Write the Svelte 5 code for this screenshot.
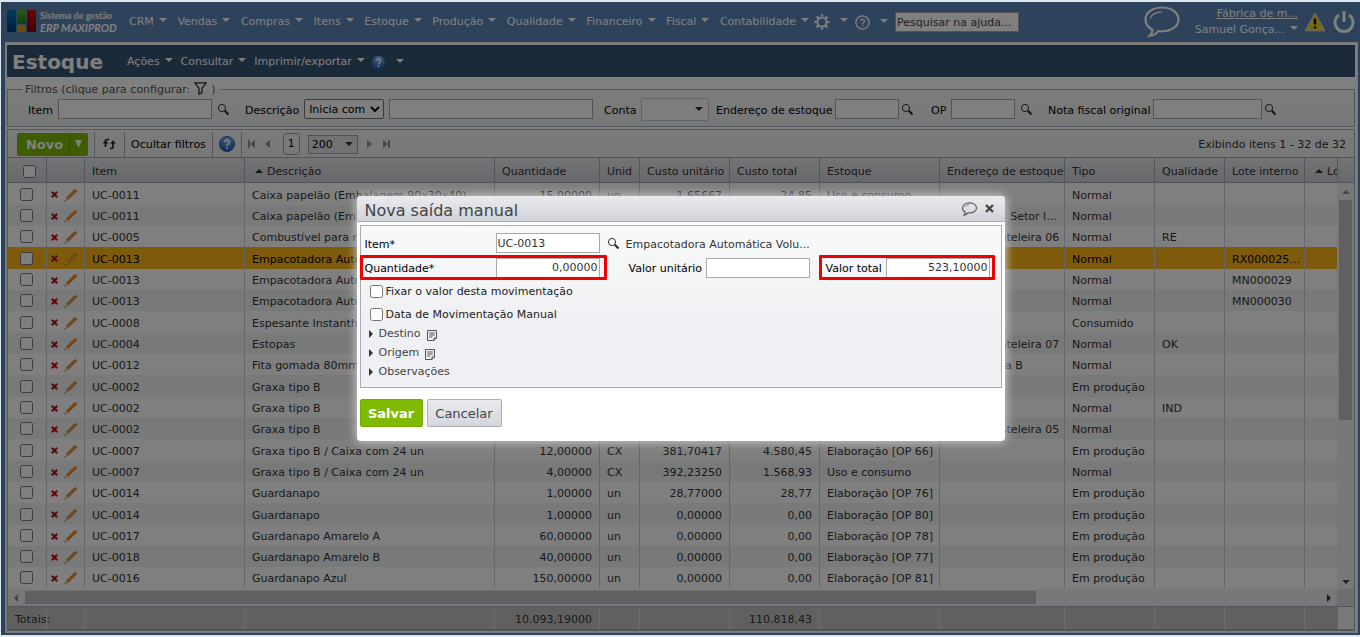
<script lang="ts">
	type Row = {
		item: string;
		descricao: string;
		quantidade?: string;
		unid?: string;
		custoUnitario?: string;
		custoTotal?: string;
		estoque?: string;
		endereco?: string;
		tipo: string;
		qualidade?: string;
		lote?: string;
	};

	const menus = [
		'CRM',
		'Vendas',
		'Compras',
		'Itens',
		'Estoque',
		'Produção',
		'Qualidade',
		'Financeiro',
		'Fiscal',
		'Contabilidade'
	];
	const actions = ['Ações', 'Consultar', 'Imprimir/exportar'];
	const columns = [39, 38, 160, 250, 105, 40, 90, 90, 120, 125, 90, 70, 80, 320];

	const rows: Row[] = [
		{ item: 'UC-0011', descricao: 'Caixa papelão (Embalagem 90x30x40)', quantidade: '15,00000', unid: 'un', custoUnitario: '1,65667', custoTotal: '24,85', estoque: 'Uso e consumo', tipo: 'Normal' },
		{ item: 'UC-0011', descricao: 'Caixa papelão (Emb', endereco: 'Estante 1 - Setor lavagem', tipo: 'Normal' },
		{ item: 'UC-0005', descricao: 'Combustível para m', endereco: 'Rua 12 Prateleira 06', tipo: 'Normal', qualidade: 'RE' },
		{ item: 'UC-0013', descricao: 'Empacotadora Auto', tipo: 'Normal', lote: 'RX000025134' },
		{ item: 'UC-0013', descricao: 'Empacotadora Auto', tipo: 'Normal', lote: 'MN000029' },
		{ item: 'UC-0013', descricao: 'Empacotadora Auto', tipo: 'Normal', lote: 'MN000030' },
		{ item: 'UC-0008', descricao: 'Espesante Instanth', tipo: 'Consumido' },
		{ item: 'UC-0004', descricao: 'Estopas', endereco: 'Rua 12 Prateleira 07', tipo: 'Normal', qualidade: 'OK' },
		{ item: 'UC-0012', descricao: 'Fita gomada 80mm', endereco: 'Câmara fria B', tipo: 'Normal' },
		{ item: 'UC-0002', descricao: 'Graxa tipo B', tipo: 'Em produção' },
		{ item: 'UC-0002', descricao: 'Graxa tipo B', tipo: 'Normal', qualidade: 'IND' },
		{ item: 'UC-0002', descricao: 'Graxa tipo B', endereco: 'Rua 12 Prateleira 05', tipo: 'Normal' },
		{ item: 'UC-0007', descricao: 'Graxa tipo B / Caixa com 24 un', quantidade: '12,00000', unid: 'CX', custoUnitario: '381,70417', custoTotal: '4.580,45', estoque: 'Elaboração [OP 66]', tipo: 'Em produção' },
		{ item: 'UC-0007', descricao: 'Graxa tipo B / Caixa com 24 un', quantidade: '4,00000', unid: 'CX', custoUnitario: '392,23250', custoTotal: '1.568,93', estoque: 'Uso e consumo', tipo: 'Normal' },
		{ item: 'UC-0014', descricao: 'Guardanapo', quantidade: '1,00000', unid: 'un', custoUnitario: '28,77000', custoTotal: '28,77', estoque: 'Elaboração [OP 76]', tipo: 'Em produção' },
		{ item: 'UC-0014', descricao: 'Guardanapo', quantidade: '1,00000', unid: 'un', custoUnitario: '0,00000', custoTotal: '0,00', estoque: 'Elaboração [OP 80]', tipo: 'Em produção' },
		{ item: 'UC-0017', descricao: 'Guardanapo Amarelo A', quantidade: '60,00000', unid: 'un', custoUnitario: '0,00000', custoTotal: '0,00', estoque: 'Elaboração [OP 78]', tipo: 'Em produção' },
		{ item: 'UC-0018', descricao: 'Guardanapo Amarelo B', quantidade: '40,00000', unid: 'un', custoUnitario: '0,00000', custoTotal: '0,00', estoque: 'Elaboração [OP 77]', tipo: 'Em produção' },
		{ item: 'UC-0016', descricao: 'Guardanapo Azul', quantidade: '150,00000', unid: 'un', custoUnitario: '0,00000', custoTotal: '0,00', estoque: 'Elaboração [OP 81]', tipo: 'Em produção' }
	];
	const selected = 3;

	let item = 'UC-0013';
	let quantidade = '0,00000';
	let valorUnitario = '';
	let valorTotal = '523,10000';
	let open = true;
</script>

{#snippet search()}
	<button class="icon-button lens" aria-label="Pesquisar">
		<svg width="13" height="13" viewBox="0 0 13 13">
			<circle cx="5" cy="5" r="3.6" fill="none" stroke="#333" />
			<path d="M7.8 7.8 11.5 11.5" stroke="#222" stroke-width="2" />
		</svg>
	</button>
{/snippet}

{#snippet help(size: number)}
	<svg width={size} height={size} viewBox="0 0 16 16">
		<defs>
			<radialGradient id="help{size}" cx="50%" cy="20%" r="80%">
				<stop offset="0" stop-color="#8fbdf2" />
				<stop offset="1" stop-color="#1c56b5" />
			</radialGradient>
		</defs>
		<circle cx="8" cy="8" r="7.5" fill="url(#help{size})" stroke="#2b5ca8" />
		<path d="M5.8 6.2C5.8 3.4 10.4 3.5 10.3 6.2 10.3 7.8 8 7.8 8 9.8" fill="none" stroke="#fff" stroke-width="1.6" />
		<circle cx="8" cy="12" r="1" fill="#fff" />
	</svg>
{/snippet}

{#snippet note()}
	<svg class="note" width="10" height="11" viewBox="0 0 10 11">
		<path d="M.5.5h9v7.500l-2.500 2.500H.5zM9.500 8H7v2.500M2.200 3h5.600M2.200 5h5.600M2.200 7h3" fill="none" stroke="#555" />
	</svg>
{/snippet}

{#snippet cols()}
	<colgroup>
		{#each columns as width}
			<col style:width={width + 'px'} />
		{/each}
	</colgroup>
{/snippet}

<div class="page">
	<header class="topbar">
		<a class="brand" href="#inicio">
			<svg width="29" height="22" viewBox="0 0 29 22">
				<defs>
					<linearGradient id="blue" x2="0" y2="1"><stop stop-color="#0078b8" /><stop offset="1" stop-color="#003c78" /></linearGradient>
					<linearGradient id="green" x2="0" y2="1"><stop stop-color="#56b42a" /><stop offset="1" stop-color="#267c14" /></linearGradient>
					<linearGradient id="red" x2="0" y2="1"><stop stop-color="#d40d12" /><stop offset="1" stop-color="#850006" /></linearGradient>
				</defs>
				<rect width="9" height="22" rx="1" fill="url(#blue)" />
				<rect x="10" width="9" height="14" rx="1" fill="url(#green)" />
				<rect x="10" y="15" width="9" height="7" rx="1" fill="#d39a10" />
				<rect x="20" width="9" height="22" rx="1" fill="url(#red)" />
			</svg>
			<span>Sistema de gestão<em>ERP MAXIPROD</em></span>
		</a>
		<nav class="menu">
			{#each menus as menu}
				<button class="menu-item">{menu}<i class="caret"></i></button>
			{/each}
		</nav>
		<button class="menu-item tool" aria-label="Configurações">
			<svg width="16" height="16" viewBox="0 0 16 16" fill="none" stroke="#fff">
				<circle cx="8" cy="8" r="4.600" stroke-width="2" />
				<circle cx="8" cy="8" r="6.600" stroke-width="2.200" stroke-dasharray="2.400 2.780" stroke-dashoffset="1.200" />
			</svg>
			<i class="caret"></i>
		</button>
		<button class="menu-item tool" aria-label="Ajuda">
			<svg width="15" height="15" viewBox="0 0 15 15" fill="none" stroke="#fff">
				<circle cx="7.500" cy="7.500" r="6.600" stroke-width="1.400" />
				<path d="M5.600 6C5.600 3.700 9.500 3.700 9.500 6 9.500 7.300 7.500 7.400 7.500 9.200M7.500 10.300v1.400" stroke-width="1.300" />
			</svg>
			<i class="caret"></i>
		</button>
		<input class="help-search" aria-label="Pesquisar na ajuda" placeholder="Pesquisar na ajuda..." />
		<div class="account">
			<button class="icon-button" aria-label="Mensagens">
				<svg width="36" height="32" viewBox="0 0 36 32" fill="none" stroke="#fff">
					<path d="M18 1.500C8.500 1.500 1.500 6.700 1.500 13.500c0 4.300 2.600 8 7 10.200-.2 2.500-1.200 4.600-3 6.300 4.200-.6 7-2.400 8.700-5 1.200.2 2.500.3 3.800.3 9.500 0 16.500-5 16.500-11.800S27.500 1.500 18 1.500z" stroke-width="2.200" />
					<path d="M6 12.500C7.500 8.500 12 6.300 17.500 6" stroke-width="1.300" />
				</svg>
			</button>
			<div class="user">
				<a href="#empresa">Fábrica de m...</a>
				<button class="menu-item">Samuel Gonça...<i class="caret"></i></button>
			</div>
			<button class="icon-button alert" aria-label="Avisos">
				<svg width="22" height="20" viewBox="0 0 22 20">
					<path d="M11 1.500 20.500 18.500H1.500z" fill="#f6d410" stroke="#d9d2b8" stroke-width="1.500" stroke-linejoin="round" />
					<path d="M11 6.500v6M11 14.300v2.200" stroke="#111" stroke-width="2.400" />
				</svg>
			</button>
			<button class="icon-button" aria-label="Sair">
				<svg width="22" height="24" viewBox="0 0 22 24" fill="none" stroke="#fff" stroke-width="3">
					<path d="M6 5a9 9 0 1 0 10 0M11 1v11" />
				</svg>
			</button>
		</div>
	</header>

	<main class="frame">
		<div class="titlebar">
			<h1>Estoque</h1>
			{#each actions as action}
				<button class="menu-item">{action}<i class="caret"></i></button>
			{/each}
			<button class="menu-item help" aria-label="Ajuda da tela">{@render help(15)}<i class="caret"></i></button>
		</div>

		<fieldset class="filters">
			<legend>
				Filtros (clique para configurar:
				<svg width="13" height="13" viewBox="0 0 13 13" fill="none" stroke="#333" stroke-width="1.300">
					<path d="M.8.8h11.400L8 6.300v4.200l-3 1.700V6.300z" />
				</svg>)
			</legend>
			<div class="filter-row">
				<div class="filter">
					<label for="f-item">Item</label>
					<input id="f-item" class="wide" />
					{@render search()}
				</div>
				<div class="filter">
					<label for="f-descricao">Descrição</label>
					<select aria-label="Tipo de busca"><option>Inicia com</option></select>
					<input id="f-descricao" class="widest" />
				</div>
				<div class="filter">
					<label for="f-conta">Conta</label>
					<button id="f-conta" class="combo" aria-label="Conta"><i class="caret dark"></i></button>
				</div>
				<div class="filter tight">
					<label for="f-endereco">Endereço de estoque</label>
					<input id="f-endereco" />
					{@render search()}
				</div>
				<div class="filter">
					<label for="f-op">OP</label>
					<input id="f-op" />
					{@render search()}
				</div>
				<div class="filter tight">
					<label for="f-nota">Nota fiscal original</label>
					<input id="f-nota" class="medium" />
					{@render search()}
				</div>
			</div>
		</fieldset>

		<section class="grid">
			<div class="toolbar">
				<div class="split">
					<button>Novo</button>
					<button class="more" aria-label="Mais opções">
						<svg width="7" height="8" viewBox="0 0 7 8" fill="#fff"><path d="M0 0h7L3.500 8z" /></svg>
					</button>
				</div>
				<button class="tool-item" aria-label="Atualizar">
					<svg width="17" height="12" viewBox="0 0 17 12" fill="none" stroke="#222" stroke-width="1.700">
						<path d="M8 1.500H6Q4.500 1.500 4.500 3V9M9 10.500h1.500Q12 10.500 12 9V3.500" />
						<path d="M1.500 5.500h6L4.500 2.500zM9 5.500h6L12 2.500z" fill="#222" stroke="none" />
					</svg>
				</button>
				<button class="tool-item">Ocultar filtros</button>
				<button class="tool-item" aria-label="Ajuda da lista">{@render help(16)}</button>
				<div class="pager">
					<button class="icon-button" aria-label="Primeira página">
						<svg width="8" height="8" viewBox="0 0 8 8" fill="#8c9099"><path d="M0 0h2v8H0zM7 0v8L2 4z" /></svg>
					</button>
					<button class="icon-button" aria-label="Página anterior">
						<svg width="8" height="8" viewBox="0 0 8 8" fill="#8c9099"><path d="M6 0v8L1 4z" /></svg>
					</button>
					<span class="current">1</span>
					<button class="page-size">200<i class="caret dark"></i></button>
					<button class="icon-button" aria-label="Próxima página">
						<svg width="8" height="8" viewBox="0 0 8 8" fill="#8c9099"><path d="M1 0v8l5-4z" /></svg>
					</button>
					<button class="icon-button" aria-label="Última página">
						<svg width="8" height="8" viewBox="0 0 8 8" fill="#8c9099"><path d="M6 0h2v8H6zM1 0v8l5-4z" /></svg>
					</button>
				</div>
				<span class="count">Exibindo itens 1 - 32 de 32</span>
			</div>

			<div class="grid-header">
				<div class="clip">
					<table>
						{@render cols()}
						<thead>
							<tr>
								<th class="check"><input type="checkbox" aria-label="Selecionar todos" /></th>
								<th></th>
								<th>Item</th>
								<th><i class="sort"></i>Descrição</th>
								<th>Quantidade</th>
								<th>Unid</th>
								<th>Custo unitário</th>
								<th>Custo total</th>
								<th>Estoque</th>
								<th>Endereço de estoque</th>
								<th>Tipo</th>
								<th>Qualidade</th>
								<th>Lote interno</th>
								<th><i class="sort"></i>Lote</th>
							</tr>
						</thead>
					</table>
				</div>
			</div>

			<div class="grid-body">
				<div class="clip">
					<table>
						{@render cols()}
						<tbody>
							{#each rows as row, i}
								<tr class:selected={i === selected}>
									<td class="check"><input type="checkbox" aria-label={row.item} checked={false} /></td>
									<td class="commands">
										<button class="icon-button" aria-label="Excluir">
											<svg width="7" height="7" viewBox="0 0 7 7" stroke="#b8101c" stroke-width="2.200"><path d="M.8.8l5.400 5.400M6.200.8.8 6.200" /></svg>
										</button>
										<button class="icon-button" aria-label="Editar">
											<svg width="14" height="14" viewBox="0 0 14 14">
												<path d="M2.200 9.800 11 1.200 13 3 4 11.800z" fill="#e8953a" stroke="#c87622" stroke-width=".6" />
												<path d="M2.200 9.800 4 11.800.8 13z" fill="#e8cfa8" />
												<path d="M.4 13.600 1 12l1 1z" fill="#333" />
											</svg>
										</button>
									</td>
									<td>{row.item}</td>
									<td>{row.descricao}</td>
									<td class="number">{row.quantidade ?? ''}</td>
									<td>{row.unid ?? ''}</td>
									<td class="number">{row.custoUnitario ?? ''}</td>
									<td class="number">{row.custoTotal ?? ''}</td>
									<td>{row.estoque ?? ''}</td>
									<td>{row.endereco ?? ''}</td>
									<td>{row.tipo}</td>
									<td>{row.qualidade ?? ''}</td>
									<td>{row.lote ?? ''}</td>
									<td></td>
								</tr>
							{/each}
						</tbody>
					</table>
				</div>
				<div class="vscroll">
					<i class="arrow up"></i>
					<div class="track"><div class="thumb"></div></div>
					<i class="arrow down"></i>
				</div>
			</div>
			<div class="hscroll">
				<i class="arrow left"></i>
				<div class="track"><div class="thumb"></div></div>
				<i class="arrow right"></i>
				<div class="corner"></div>
			</div>

			<div class="grid-footer">
				<div class="clip">
					<table>
						{@render cols()}
						<tbody>
							<tr>
								<td class="totals">Totais:</td>
								<td></td>
								<td></td>
								<td></td>
								<td class="number">10.093,19000</td>
								<td></td>
								<td></td>
								<td class="number">110.818,43</td>
								<td></td>
								<td></td>
								<td></td>
								<td></td>
								<td></td>
								<td></td>
							</tr>
						</tbody>
					</table>
				</div>
			</div>
		</section>
	</main>

	{#if open}
		<div class="overlay">
			<div class="dialog" role="dialog" aria-labelledby="dialog-title">
				<div class="dialog-header">
					<h2 id="dialog-title">Nova saída manual</h2>
					<button class="icon-button" aria-label="Comentários">
						<svg width="17" height="14" viewBox="0 0 36 32" fill="none" stroke="#555">
							<path d="M18 2C8.500 2 2 7 2 13.500c0 4.300 2.300 7.800 6.500 9.800-.2 2.500-1.200 4.700-3 6.700 4.200-.6 7-2.700 8.700-5.200 1.200.2 2.500.3 3.800.3C27.500 25.100 34 20 34 13.500S27.500 2 18 2z" stroke-width="2.400" />
							<path d="M7 12C8.500 8.500 12 7 17 6.500" stroke-width="1.500" />
						</svg>
					</button>
					<button class="icon-button" aria-label="Fechar" on:click={() => (open = false)}>
						<svg width="9" height="9" viewBox="0 0 9 9" stroke="#444" stroke-width="2.400"><path d="M1 1l7 7M8 1 1 8" /></svg>
					</button>
				</div>
				<form class="panel" on:submit|preventDefault>
					<div class="row first">
						<div class="field">
							<label for="item">Item*</label>
							<input id="item" class="code" bind:value={item} />
						</div>
						{@render search()}
						<span class="item-name">Empacotadora Automática Volu...</span>
					</div>
					<div class="row">
						<div class="field marked">
							<label for="quantidade">Quantidade*</label>
							<input id="quantidade" bind:value={quantidade} />
						</div>
						<div class="field unit">
							<label for="unitario">Valor unitário</label>
							<input id="unitario" bind:value={valorUnitario} />
						</div>
						<div class="field marked total">
							<label for="total">Valor total</label>
							<input id="total" bind:value={valorTotal} />
						</div>
					</div>
					<label class="option"><input type="checkbox" />Fixar o valor desta movimentação</label>
					<label class="option"><input type="checkbox" />Data de Movimentação Manual</label>
					<button type="button" class="expander"><i class="arrow right"></i>Destino {@render note()}</button>
					<button type="button" class="expander"><i class="arrow right"></i>Origem {@render note()}</button>
					<button type="button" class="expander"><i class="arrow right"></i>Observações</button>
				</form>
				<div class="buttons">
					<button class="save">Salvar</button>
					<button class="cancel" on:click={() => (open = false)}>Cancelar</button>
				</div>
			</div>
		</div>
	{/if}
</div>

<style>
	:global(body) {
		background: #fff;
	}
	.page {
		--line: #a5abb8;
		--text: #333;
		box-sizing: border-box;
		position: relative;
		display: flex;
		flex-direction: column;
		min-height: 100vh;
		background: #5d85b8;
		border: solid #dce9f0;
		border-width: 2px 0 2px 1px;
		color: var(--text);
		font-family: Verdana, 'DejaVu Sans', sans-serif;
		font-size: 11px;
		overflow: hidden;
	}
	button,
	input,
	select {
		font: inherit;
		color: inherit;
	}
	button {
		margin: 0;
		padding: 0;
		border: 0;
		background: none;
		white-space: nowrap;
	}
	svg {
		display: block;
	}
	input:not([type='checkbox']) {
		box-sizing: border-box;
		width: 64px;
		height: 20px;
		padding: 0 1px;
		border: 1px solid #a9a9a9;
		background: #fff;
	}
	input[type='checkbox'] {
		width: 13px;
		height: 13px;
		margin: 0;
	}
	.icon-button {
		display: inline-block;
		flex: none;
	}
	.caret {
		display: inline-block;
		flex: none;
		border: 4px solid transparent;
		border-top-color: currentColor;
		border-bottom: 0;
	}
	.caret.dark {
		color: #333;
	}
	.arrow {
		flex: none;
		border: 4px solid transparent;
	}
	.arrow.up {
		border-top: 0;
		border-bottom-color: #888;
	}
	.arrow.down {
		border-bottom: 0;
		border-top-color: #444;
	}
	.arrow.left {
		border-left: 0;
		border-right-color: #888;
	}
	.arrow.right {
		border-right: 0;
		border-left-color: #333;
	}

	/* top bar */
	.topbar {
		display: flex;
		align-items: center;
		height: 40px;
		padding: 0 5px 0 6px;
		color: #fff;
	}
	.brand {
		display: flex;
		gap: 4px;
		width: 122px;
		color: #fff;
		font: bold 9px/12px Lato, sans-serif;
		text-decoration: none;
		white-space: nowrap;
	}
	.brand em {
		display: block;
		font-size: 11px;
	}
	.menu {
		display: flex;
		justify-content: space-between;
		width: 680px;
		margin-right: 5px;
	}
	.menu-item {
		display: flex;
		gap: 5px;
		line-height: 16px;
	}
	.menu-item .caret {
		margin-top: 4px;
	}
	.tool {
		gap: 10px;
		margin-right: 7px;
	}
	.help-search:not([type='checkbox']) {
		width: 124px;
		color: #333;
	}
	.help-search::placeholder {
		color: #444;
	}
	.account {
		display: flex;
		align-items: center;
		margin-left: auto;
	}
	.user {
		display: flex;
		flex-direction: column;
		align-items: flex-end;
		width: 118px;
		margin-right: 6px;
		line-height: 16px;
	}
	.user a {
		color: #fff;
	}
	.alert {
		margin-right: 7px;
	}

	/* content frame */
	.frame {
		display: flex;
		flex: 1;
		flex-direction: column;
		margin: 0 2px 2px 4px;
		padding: 2px 2px 1px 1px;
		border: 1px solid #eee;
		background: #fff;
	}
	.titlebar {
		display: flex;
		align-items: center;
		gap: 8px;
		box-sizing: border-box;
		height: 32px;
		padding: 2px 0 0 5px;
		background: #365472;
		color: #fff;
	}
	.titlebar h1 {
		width: 107px;
		margin: 0;
		font-size: 20px;
		line-height: 30px;
	}
	.titlebar .help {
		gap: 10px;
		margin-left: -2px;
	}
	.filters {
		min-width: 0;
		margin: 5px 0 2px;
		padding: 0 0 6px;
		border: 1px solid var(--line);
		background: linear-gradient(#f7f8f8, #eef1f0);
	}
	.filters legend {
		display: flex;
		gap: 4px;
		height: 14px;
		margin-left: 14px;
		padding: 0 3px;
		color: #555;
		line-height: 15px;
		white-space: nowrap;
	}
	.filter-row {
		display: grid;
		grid-template-columns: 217px 359px 112px 215px 117px auto;
		padding: 2px 0 0 20px;
	}
	.filter {
		display: flex;
		align-items: center;
		gap: 5px;
		height: 22px;
		color: #000;
		white-space: nowrap;
	}
	.filter.tight {
		gap: 2px;
	}
	.filter label {
		padding-top: 3px;
	}
	.filter input.wide {
		width: 154px;
	}
	.filter input.widest {
		width: 204px;
	}
	.filter input.medium {
		width: 109px;
	}
	.filter select {
		width: 80px;
		height: 20px;
		padding: 0;
		border: 1px solid #767676;
		border-radius: 2px;
		background: #fff;
	}
	.combo {
		display: flex;
		align-items: center;
		justify-content: flex-end;
		width: 68px;
		height: 23px;
		padding-right: 5px;
		border: 1px solid #c5c9cc;
		border-radius: 2px;
		background: #fdfdfd;
	}

	/* grid */
	.grid {
		display: flex;
		flex: 1;
		flex-direction: column;
		border: 1px solid var(--line);
	}
	.toolbar {
		box-sizing: border-box;
		display: flex;
		align-items: center;
		height: 27px;
		padding: 1px 8px 0 9px;
		background: linear-gradient(#f4f5f5, #eef0ef);
		color: #000;
	}
	.split {
		display: flex;
		height: 23px;
		margin-right: 6px;
		border-radius: 2px;
		background: #7fba00;
		color: #fff;
		font-size: 13px;
		font-weight: bold;
	}
	.split button {
		width: 52px;
		padding-left: 3px;
	}
	.split .more {
		width: 19px;
		padding-left: 5px;
		border-left: 1px solid #6ea100;
	}
	.tool-item {
		display: flex;
		align-items: center;
		height: 25px;
		padding: 0 6px;
		border-left: 1px solid var(--line);
	}
	.pager {
		display: flex;
		align-items: center;
		gap: 8px;
		height: 25px;
		padding-left: 6px;
		border-left: 1px solid var(--line);
	}
	.current {
		width: 15px;
		margin-left: 3px;
		border: 1px solid #a0a0a0;
		border-radius: 4px;
		line-height: 20px;
		text-align: center;
	}
	.page-size {
		display: flex;
		align-items: center;
		justify-content: space-between;
		width: 50px;
		height: 19px;
		padding: 0 4px 0 3px;
		border: 1px solid #a0a4ac;
		background: #e2e4e6;
	}
	.count {
		margin-left: auto;
		color: #333;
	}
	.clip {
		flex: 1;
		min-width: 0;
		overflow: hidden;
	}
	table {
		width: 1617px;
		border-spacing: 0;
		table-layout: fixed;
	}
	th,
	td {
		box-sizing: border-box;
		height: 21px;
		padding: 2px 2px 0 7px;
		border-right: 1px solid #c9ccd2;
		font-weight: normal;
		line-height: 13px;
		text-align: left;
		white-space: nowrap;
		overflow: hidden;
		text-overflow: ellipsis;
	}
	.grid-header {
		display: flex;
		padding-right: 17px;
		border: solid var(--line);
		border-width: 1px 0;
		background: linear-gradient(#e8e9ec, #cdd0d5);
	}
	.grid-header .clip {
		border-right: 1px solid var(--line);
		margin-right: -1px;
	}
	th {
		height: 24px;
		padding-right: 0;
		border-color: var(--line);
	}
	.sort {
		display: inline-block;
		margin: 0 4px 2px 3px;
		border: 4px solid transparent;
		border-top: 0;
		border-bottom-color: #333;
	}
	th.check {
		padding-left: 15px;
	}
	td.check {
		padding: 0 0 0 12px;
	}
	.check input {
		display: block;
	}
	.commands {
		padding: 1px 0 0 4px;
		font-size: 0;
		text-overflow: clip;
	}
	.commands button {
		margin-right: 6px;
		vertical-align: middle;
	}
	.commands button:last-child {
		margin-right: 0;
	}
	.number {
		padding-right: 7px;
		text-align: right;
	}
	.grid-body {
		display: flex;
		flex: 1 0 auto;
	}
	.grid-body tr:nth-child(even) {
		background: #eff4f3;
	}
	.grid-body tr:nth-child(3n + 1):not(:last-child) td {
		height: 22px;
	}
	.grid-body tr.selected {
		background: #fab717;
		color: #000;
	}
	.vscroll {
		display: flex;
		flex-direction: column;
		align-items: center;
		width: 17px;
		padding: 7px 0 5px;
		box-sizing: border-box;
		background: #f1f1f1;
	}
	.track {
		flex: 1;
	}
	.thumb {
		background: #c1c1c1;
	}
	.vscroll .track {
		width: 13px;
		margin: 6px 0 7px;
	}
	.vscroll .thumb {
		height: 59%;
	}
	.hscroll {
		display: flex;
		align-items: center;
		height: 17px;
		padding-left: 6px;
		background: #f1f1f1;
	}
	.hscroll .track {
		margin: 0 6px 0 7px;
	}
	.hscroll .thumb {
		width: 78%;
		height: 13px;
	}
	.corner {
		width: 17px;
		height: 17px;
		margin-left: 6px;
		background: #dcdcdc;
	}
	.grid-footer {
		display: flex;
		padding-right: 16px;
		border: solid var(--line);
		border-width: 1px 0;
		background: #eff4f3;
	}
	.grid-footer td {
		height: 22px;
		border-color: #d8dadd;
		background: #c1c1c1;
	}
	.grid-footer .totals {
		overflow: visible;
	}

	/* dialog */
	.overlay {
		position: absolute;
		inset: 0;
		z-index: 10;
		display: flex;
		align-items: center;
		justify-content: center;
		background: rgba(0, 0, 0, 0.5);
	}
	.dialog {
		box-sizing: border-box;
		width: 648px;
		max-width: 100%;
		border-radius: 4px;
		background: #fff;
		box-shadow: 0 0 10px 1px #ccc;
	}
	.dialog-header {
		display: flex;
		align-items: center;
		gap: 7px;
		height: 25px;
		padding: 0 11px 0 8px;
		border-bottom: 1px solid var(--line);
		border-radius: 4px 4px 0 0;
		background: linear-gradient(#ebebef, #d0d3d9);
	}
	.dialog-header h2 {
		flex: 1;
		margin: 0;
		padding-top: 5px;
		color: #444;
		font-size: 16px;
		font-weight: normal;
		line-height: 20px;
	}
	.panel {
		margin: 3px 3px 0;
		padding: 7px 4px 6px;
		border: 1px solid var(--line);
		background: linear-gradient(#f8fafa, #eff0f3 60%);
		color: #222;
	}
	.row {
		display: flex;
		align-items: center;
		height: 25px;
		margin: 0 -5px 5px;
	}
	.row.first {
		height: 20px;
		margin-bottom: 2px;
	}
	.field {
		position: relative;
		box-sizing: border-box;
		display: flex;
		align-items: center;
		justify-content: space-between;
		width: 247px;
		padding: 0 7px 0 5px;
		color: #000;
	}
	.field label {
		padding-top: 2px;
	}
	.field input:not([type='checkbox']) {
		width: 104px;
		color: #333;
		text-align: right;
	}
	.field input.code:not([type='checkbox']) {
		text-align: left;
	}
	.marked {
		height: 25px;
	}
	.marked::after {
		content: '';
		position: absolute;
		inset: 0;
		border: 3px solid #f00000;
		border-radius: 1px;
		pointer-events: none;
	}
	.field.unit {
		width: 203px;
		margin-left: 17px;
		padding: 0 17px 0 5px;
	}
	.field.total {
		width: 176px;
		margin-left: -8px;
		padding: 0 5px 0 7px;
	}
	.item-name {
		margin-left: 6px;
		padding-top: 2px;
		color: #333;
	}
	.option {
		display: flex;
		align-items: center;
		gap: 3px;
		height: 13px;
		margin: 0 0 10px 5px;
	}
	.expander {
		display: flex;
		align-items: center;
		gap: 6px;
		height: 19px;
		padding-left: 4px;
		color: #444;
	}
	.option + .expander {
		margin-top: -7px;
	}
	.note {
		margin-top: 3px;
	}
	.buttons {
		display: flex;
		gap: 4px;
		padding: 11px 3px 14px;
	}
	.buttons button {
		box-sizing: border-box;
		height: 28px;
		border: 1px solid #76a800;
		border-radius: 2px;
		font-size: 13px;
	}
	.buttons .save {
		width: 63px;
		background: #7fba00;
		color: #fff;
		font-weight: bold;
	}
	.buttons .cancel {
		width: 75px;
		border-color: #a9afb8;
		background: linear-gradient(#eaebee, #d3d6db);
		color: #444;
	}
</style>
